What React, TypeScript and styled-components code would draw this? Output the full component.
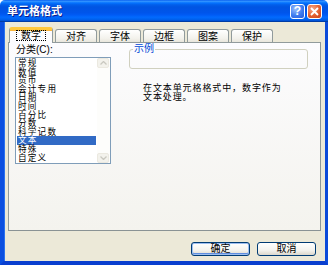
import React from "react";
import styled, { createGlobalStyle } from "styled-components";

const GlobalStyle = createGlobalStyle`
  html, body {
    margin: 0;
    padding: 0;
    background: #ffffff;
  }
  body {
    font-family: "Liberation Sans", "Noto Sans CJK SC", sans-serif;
    font-size: 10px;
    color: #000;
  }
`;

const Window = styled.div`
  width: 328px;
  height: 265px;
  display: flex;
  flex-direction: column;
  box-sizing: border-box;
`;

const TitleBar = styled.div`
  height: 22px;
  flex: none;
  display: flex;
  align-items: center;
  padding: 0 6px 0 7px;
  border-radius: 5px 5px 0 0;
  background: linear-gradient(
    #0058ee 0%,
    #3593ff 5%,
    #288eff 8%,
    #127dff 11%,
    #036ffc 15%,
    #0262ee 20%,
    #0057e5 28%,
    #0054e3 35%,
    #0055eb 58%,
    #005bf5 68%,
    #026afe 78%,
    #0062ef 88%,
    #0052d6 94%,
    #0040ab 97%,
    #003092 100%
  );
`;

const Title = styled.span`
  flex: 1;
  color: #ffffff;
  font-weight: bold;
  font-size: 11px;
  line-height: 14px;
  text-shadow: 1px 1px 0 #0a1e8c;
`;

const CaptionButtons = styled.div`
  display: flex;
  gap: 2px;
`;

const CaptionButton = styled.div<{ $variant: "help" | "close" }>`
  width: 15px;
  height: 15px;
  box-sizing: border-box;
  border: 1px solid #ffffff;
  border-radius: 3px;
  display: flex;
  align-items: center;
  justify-content: center;
  color: #ffffff;
  font-weight: bold;
  font-size: 12px;
  line-height: 12px;
  background: ${(p) =>
    p.$variant === "close"
      ? "radial-gradient(circle at 35% 30%, #f6a88a 0%, #e3602f 55%, #c7401a 100%)"
      : "radial-gradient(circle at 35% 30%, #9cc0fb 0%, #3d7cf0 55%, #2458d8 100%)"};
`;

const Frame = styled.div`
  flex: 1;
  display: flex;
  flex-direction: column;
  border-left: 4px solid #0b4fe0;
  border-right: 3px solid #0b4ad9;
  border-bottom: 4px solid #0a3fcf;
  box-shadow: inset 1px 0 0 #2a72f0;
  background: #ece9d8;
  padding: 5px 4px 0 4px;
`;

const TabRow = styled.div`
  display: flex;
  align-items: flex-end;
  gap: 2px;
  padding-left: 3px;
  height: 15px;
  position: relative;
  z-index: 1;
`;

const Tab = styled.div<{ $active?: boolean }>`
  box-sizing: border-box;
  width: ${(p) => (p.$active ? 44 : 42)}px;
  height: ${(p) => (p.$active ? 16 : 13)}px;
  margin-left: ${(p) => (p.$active ? -2 : 0)}px;
  margin-bottom: ${(p) => (p.$active ? -1 : 0)}px;
  border: 1px solid #919b9c;
  border-bottom: none;
  border-radius: 3px 3px 0 0;
  display: flex;
  align-items: center;
  justify-content: center;
  font-size: 10px;
  line-height: 11px;
  background: ${(p) =>
    p.$active ? "#fcfcfe" : "linear-gradient(#ffffff, #f3f2ec 70%, #e8e6dc)"};
  border-top: ${(p) => (p.$active ? "3px solid #ffc83c" : "1px solid #919b9c")};
  box-shadow: ${(p) => (p.$active ? "inset 0 1px 0 #f9b53c" : "none")};
  padding-bottom: ${(p) => (p.$active ? 2 : 0)}px;
`;

const FocusText = styled.span`
  outline: 1px dotted #000;
  outline-offset: 0;
  padding: 0 4px;
  line-height: 9px;
`;

const Panel = styled.div`
  width: 313px;
  height: 189px;
  box-sizing: border-box;
  border: 1px solid #919b9c;
  border-right-color: #8d9697;
  border-bottom-color: #8a9394;
  background: linear-gradient(#fcfcfe, #f4f3ee);
  display: flex;
  padding: 1px 6px 0 6px;
`;

const LeftColumn = styled.div`
  display: flex;
  flex-direction: column;
  width: 96px;
`;

const FieldLabel = styled.div`
  padding-left: 1px;
  height: 12px;
  line-height: 12px;
  margin-bottom: 1px;
  font-size: 10px;
`;

const ListBox = styled.div`
  width: 96px;
  height: 107px;
  box-sizing: border-box;
  border: 1px solid #7f9db9;
  background: #ffffff;
  display: flex;
`;

const ListItems = styled.div`
  flex: 1;
  padding: 1px;
`;

const ListItem = styled.div<{ $selected?: boolean }>`
  height: 8.6px;
  line-height: 8.6px;
  font-size: 8.6px;
  letter-spacing: 1.2px;
  padding-left: 1px;
  white-space: nowrap;
  color: ${(p) => (p.$selected ? "#ffffff" : "#000000")};
  background: ${(p) => (p.$selected ? "#316ac5" : "transparent")};
`;

const ScrollBar = styled.div`
  width: 13px;
  display: flex;
  flex-direction: column;
  justify-content: space-between;
  background: #fdfdfb;
`;

const ScrollButton = styled.div`
  width: 12px;
  height: 10px;
  box-sizing: border-box;
  border: 1px solid #ebe9e0;
  border-radius: 2px;
  background: #f3f2ec;
  display: flex;
  align-items: center;
  justify-content: center;
`;

const RightColumn = styled.div`
  margin-left: 18px;
  width: 179px;
  display: flex;
  flex-direction: column;
`;

const SampleBox = styled.fieldset`
  margin: 0;
  padding: 0;
  border: 1px solid #d0d0bf;
  border-radius: 3px;
  height: 25px;
  box-sizing: border-box;
`;

const SampleLegend = styled.legend`
  color: #0046d5;
  font-size: 10px;
  line-height: 10px;
  padding: 0 1px;
  margin-left: 3px;
`;

const Description = styled.div`
  margin-top: 15px;
  padding-left: 14px;
  font-size: 9px;
  letter-spacing: 0.9px;
  line-height: 9px;
`;

const ButtonRow = styled.div`
  display: flex;
  justify-content: flex-end;
  gap: 7px;
  padding-top: 11px;
  padding-right: 5px;
`;

const PushButton = styled.div<{ $default?: boolean }>`
  width: 59px;
  height: 14px;
  box-sizing: border-box;
  border: 1px solid #003c74;
  border-radius: 3px;
  display: flex;
  align-items: center;
  justify-content: center;
  font-size: 10px;
  line-height: 10px;
  background: linear-gradient(#ffffff, #f4f3ee 60%, #dcd8cc);
  box-shadow: ${(p) =>
    p.$default ? "inset 0 0 0 1px #9dbef0, inset 0 -1px 0 1px #5f8ee0" : "none"};
`;

const categories = [
  "常规",
  "数值",
  "货币",
  "会计专用",
  "日期",
  "时间",
  "百分比",
  "分数",
  "科学记数",
  "文本",
  "特殊",
  "自定义",
];

const tabs = ["数字", "对齐", "字体", "边框", "图案", "保护"];

const Chevron: React.FC<{ up?: boolean }> = ({ up }) => (
  <svg width="7" height="4" viewBox="0 0 7 4">
    <path
      d={up ? "M0.5 3.5 L3.5 0.5 L6.5 3.5" : "M0.5 0.5 L3.5 3.5 L6.5 0.5"}
      fill="none"
      stroke="#c9c8c0"
      strokeWidth="1.3"
    />
  </svg>
);

const App: React.FC = () => {
  return (
    <>
      <GlobalStyle />
      <Window>
        <TitleBar>
          <Title>单元格格式</Title>
          <CaptionButtons>
            <CaptionButton $variant="help">?</CaptionButton>
            <CaptionButton $variant="close">
              <svg width="9" height="9" viewBox="0 0 9 9">
                <path d="M1 1 L8 8 M8 1 L1 8" stroke="#ffffff" strokeWidth="1.8" />
              </svg>
            </CaptionButton>
          </CaptionButtons>
        </TitleBar>
        <Frame>
          <TabRow>
            {tabs.map((t, i) => (
              <Tab key={t} $active={i === 0}>
                {i === 0 ? <FocusText>{t}</FocusText> : t}
              </Tab>
            ))}
          </TabRow>
          <Panel>
            <LeftColumn>
              <FieldLabel>分类(C):</FieldLabel>
              <ListBox>
                <ListItems>
                  {categories.map((c) => (
                    <ListItem key={c} $selected={c === "文本"}>
                      {c}
                    </ListItem>
                  ))}
                </ListItems>
                <ScrollBar>
                  <ScrollButton>
                    <Chevron up />
                  </ScrollButton>
                  <ScrollButton>
                    <Chevron />
                  </ScrollButton>
                </ScrollBar>
              </ListBox>
            </LeftColumn>
            <RightColumn>
              <SampleBox>
                <SampleLegend>示例</SampleLegend>
              </SampleBox>
              <Description>
                在文本单元格格式中，数字作为
                <br />
                文本处理。
              </Description>
            </RightColumn>
          </Panel>
          <ButtonRow>
            <PushButton $default>确定</PushButton>
            <PushButton>取消</PushButton>
          </ButtonRow>
        </Frame>
      </Window>
    </>
  );
};

export default App;
